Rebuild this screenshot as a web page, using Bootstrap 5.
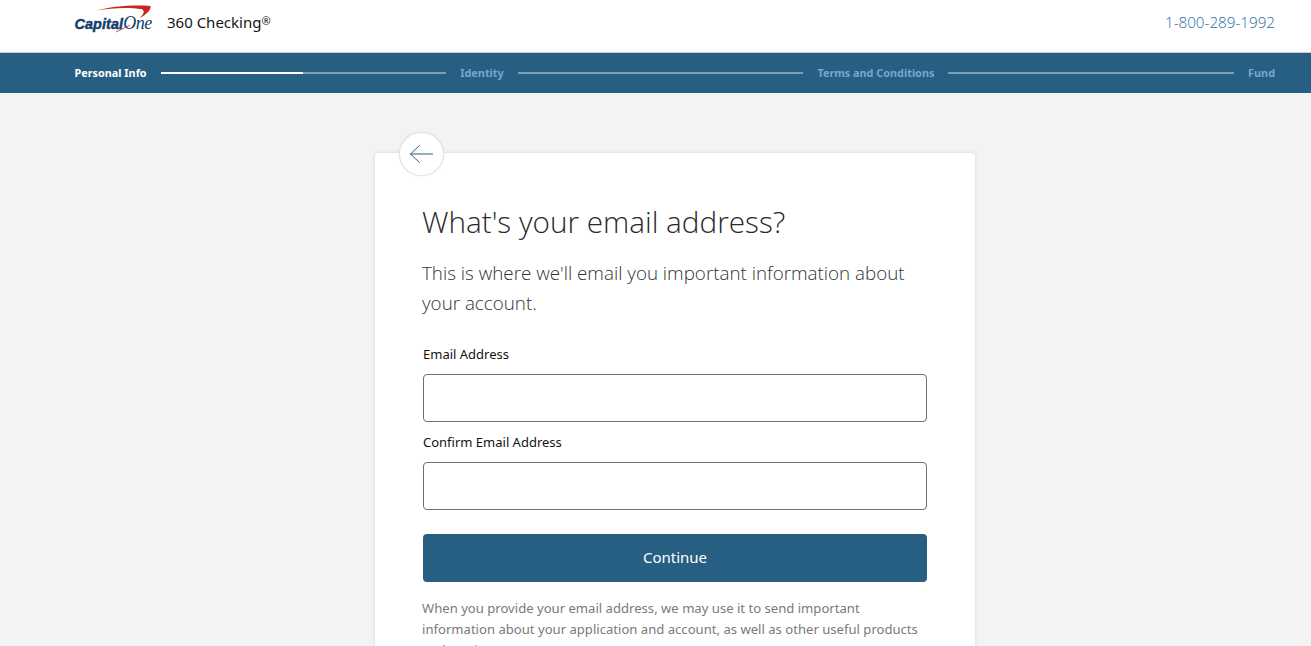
<!DOCTYPE html>
<html lang="en">
<head>
    <meta charset="UTF-8">
    <meta name="viewport" content="width=device-width, initial-scale=1.0">
    <title>360 Checking</title>
    <link rel="stylesheet" href="https://cdn.jsdelivr.net/npm/bootstrap@5.3.0/dist/css/bootstrap.min.css">
    <style>
        html, body { height: 646px; overflow: hidden; }
        body { background: #f3f3f3; font-family: "Noto Sans", "Open Sans", sans-serif; color: #141414; }
        .top-head { height: 53px; background: #fff; border-bottom: 1px solid #c9c9c9; padding: 0 36px 0 74.5px; }
        .logo-box { position: relative; width: 80.5px; height: 36px; margin-top: -8px; }
        .logo-box svg { position: absolute; left: 0; top: 0; }
        .logo-word { position: absolute; left: 0; top: 11px; font-family: "Liberation Sans", sans-serif; font-style: italic; line-height: 16px; color: #11406d; white-space: nowrap; }
        .logo-word b { font-weight: 700; font-size: 14.4px; letter-spacing: .1px; -webkit-text-stroke: .45px #11406d; }
        .logo-word i { font-family: "Liberation Serif", serif; font-size: 18px; letter-spacing: -.5px; }
        .prod-name { font-size: 15px; margin-left: 12px; margin-top: -7px; }
        .prod-name sup { font-size: 11px; top: -.3em; }
        .phone-link { font-family: "Open Sans", sans-serif; font-weight: 300; font-size: 15.2px; color: #2a6a9c; text-decoration: none; margin-top: -7px; }
        .step-bar { height: 40px; background: #265f82; padding: 0 36px 0 74.5px; font-size: 10.85px; font-weight: 700; color: #7ba5cc; gap: 14px; }
        .step-bar .now { color: #fff; }
        .step-line { flex: 1 1 0; height: 2px; background: #7d9fb4; }
        .step-line span { display: block; width: 50%; height: 2px; background: #fff; }
        .form-box { position: relative; width: 600px; margin: 60px 0 0 375px; padding: 48px 48px 40px; background: #fff; border-radius: 4px; box-shadow: 0 0 4px rgba(0,0,0,.12); }
        .back-btn { position: absolute; left: 24px; top: -21px; width: 45px; height: 44px; padding: 0; border-radius: 50%; background: #fff; border: 1px solid #e3e3e3; box-shadow: 0 0 2px rgba(0,0,0,.1); }
        .form-box h1 { font-family: "Open Sans", sans-serif; font-weight: 300; font-size: 29.7px; line-height: 42px; margin: 0 0 15px -1px; color: #2a2a2a; }
        .sub-copy { font-family: "Open Sans", sans-serif; font-weight: 300; font-size: 18.8px; line-height: 30px; margin: 0 0 26px -1px; color: #333; }
        .form-box .form-label { font-size: 13px; line-height: 20px; margin-bottom: 10px; display: block; }
        .form-box .form-control { height: 48px; border: 1px solid #707070; border-radius: 4px; margin-bottom: 10px; }
        .go-btn { display: block; width: 100%; height: 48px; margin-top: 24px; padding: 0 0 2px; background: #265f82; color: #fff; border: 0; border-radius: 4px; font-size: 15px; }
        .fine-copy { font-size: 13.1px; line-height: 21px; color: #7a7a7a; margin: 16px 0 0 -1px; }
    </style>
</head>
<body>
    <!-- Header -->
    <div class="top-head d-flex align-items-center">
        <div class="logo-box">
            <svg width="80" height="36" viewBox="0 0 80 36">
                <path d="M21 6.5 C36 2.5 58 0.5 75.5 2 C76.5 5.5 72 10 65 14 C69 9.5 70 7 67 5.3 C54 3.2 36 4 21 6.5 Z" fill="#c8261f"/>
                <path d="M41 28 L55 21" stroke="#c8261f" stroke-width=".8"/>
            </svg>
            <div class="logo-word"><b>Capital</b><i>One</i></div>
        </div>
        <div class="prod-name">360 Checking<sup>®</sup></div>
        <a class="phone-link ms-auto" href="#">1-800-289-1992</a>
    </div>

    <!-- Steps -->
    <div class="step-bar d-flex align-items-center">
        <span class="now">Personal Info</span>
        <div class="step-line"><span></span></div>
        <span>Identity</span>
        <div class="step-line"></div>
        <span>Terms and Conditions</span>
        <div class="step-line"></div>
        <span>Fund</span>
    </div>

    <!-- Form -->
    <div class="form-box">
        <button class="back-btn d-flex align-items-center justify-content-center" type="button" aria-label="Back">
            <svg width="26" height="20" viewBox="0 0 26 20" fill="none" stroke="#26608a" stroke-width="1">
                <path d="M1 10 H24 M10.5 1.5 L1.5 10 L10.5 18.5"/>
            </svg>
        </button>
        <h1>What's your email address?</h1>
        <p class="sub-copy">This is where we'll email you important information about your account.</p>
        <form onsubmit="event.preventDefault()">
            <label class="form-label" for="email1">Email Address</label>
            <input class="form-control" id="email1" type="email">
            <label class="form-label" for="email2">Confirm Email Address</label>
            <input class="form-control" id="email2" type="email">
            <button class="go-btn" type="submit">Continue</button>
        </form>
        <p class="fine-copy">When you provide your email address, we may use it to send important information about your application and account, as well as other useful products and services.</p>
    </div>
    <script src="https://cdn.jsdelivr.net/npm/bootstrap@5.3.0/dist/js/bootstrap.bundle.min.js"></script>
</body>
</html>
